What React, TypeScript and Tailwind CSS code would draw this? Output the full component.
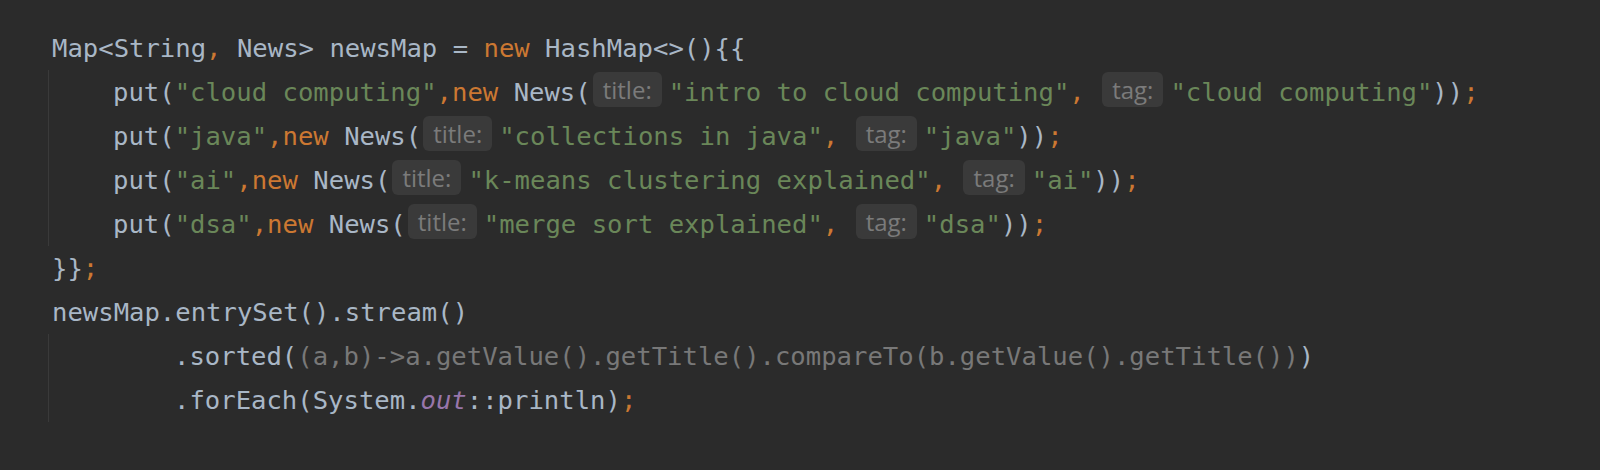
import type { ReactNode } from "react";

const mono = "font-['DejaVu_Sans_Mono',monospace] text-[25.6px] leading-[44px]";

function D({ children }: { children: ReactNode }) {
  return <span className="text-[#a9b7c6]">{children}</span>;
}
function K({ children }: { children: ReactNode }) {
  return <span className="text-[#cc7832]">{children}</span>;
}
function S({ children }: { children: ReactNode }) {
  return <span className="text-[#6a8759]">{children}</span>;
}
function G({ children }: { children: ReactNode }) {
  return <span className="text-[#787878]">{children}</span>;
}
function F({ children }: { children: ReactNode }) {
  return <span className="text-[#9876aa] italic">{children}</span>;
}

// inlay parameter hint, the grey pill before an argument
function Hint({ label }: { label: string }) {
  return (
    <span className="mt-[2px] ml-[2px] mr-[7px] h-[35px] rounded-[6px] bg-[#3a3a3a] px-[10px] font-['Open_Sans',sans-serif] text-[24px] leading-[35px] text-[#7b7b7b]">
      {label}
    </span>
  );
}

function Line({ children }: { children: ReactNode }) {
  return <div className="flex h-[44px] items-start whitespace-pre">{children}</div>;
}

function Put({ k, title, tag }: { k: string; title: string; tag: string }) {
  return (
    <Line>
      <D>put(</D>
      <S>{`"${k}"`}</S>
      <K>,new</K>
      <D> News(</D>
      <Hint label="title:" />
      <S>{`"${title}"`}</S>
      <K>, </K>
      <Hint label="tag:" />
      <S>{`"${tag}"`}</S>
      <D>))</D>
      <K>;</K>
    </Line>
  );
}

export default function App() {
  return (
    <div className={`h-[470px] w-full bg-[#2b2b2b] pt-[26px] pl-[48px] ${mono}`}>
      <div className="pl-[4px]">
        <Line>
          <D>{"Map<String"}</D>
          <K>,</K>
          <D>{" News> newsMap = "}</D>
          <K>new</K>
          <D>{" HashMap<>(){{"}</D>
        </Line>
      </div>
      <div className="border-l border-[#3a3a3a] pl-[64px]">
        <Put k="cloud computing" title="intro to cloud computing" tag="cloud computing" />
        <Put k="java" title="collections in java" tag="java" />
        <Put k="ai" title="k-means clustering explained" tag="ai" />
        <Put k="dsa" title="merge sort explained" tag="dsa" />
      </div>
      <div className="pl-[4px]">
        <Line>
          <D>{"}}"}</D>
          <K>;</K>
        </Line>
        <Line>
          <D>newsMap.entrySet().stream()</D>
        </Line>
      </div>
      <div className="border-l border-[#3a3a3a] pl-[125px]">
        <Line>
          <D>.sorted(</D>
          <G>(a,b)-&gt;a.getValue().getTitle().compareTo(b.getValue().getTitle())</G>
          <D>)</D>
        </Line>
        <Line>
          <D>.forEach(System.</D>
          <F>out</F>
          <D>::println)</D>
          <K>;</K>
        </Line>
      </div>
    </div>
  );
}
